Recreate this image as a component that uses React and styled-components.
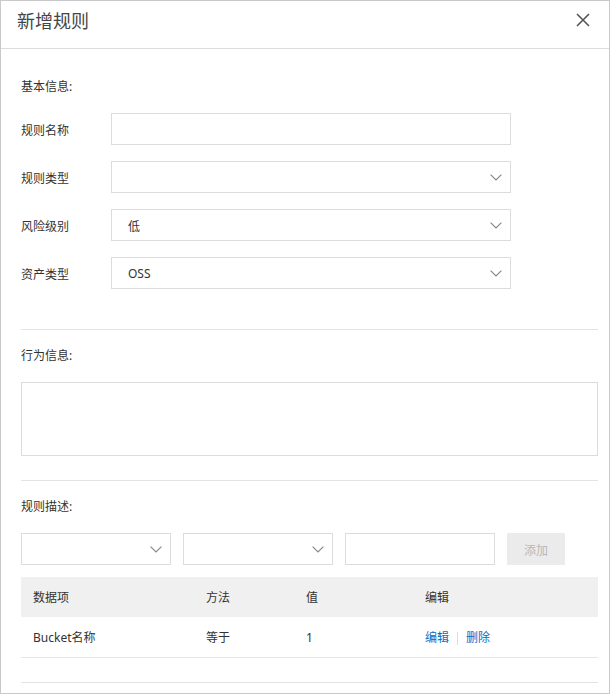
import React from "react";
import styled, { createGlobalStyle } from "styled-components";

const Global = createGlobalStyle`
  html, body { margin: 0; padding: 0; background: #fff; }
  body { font-family: "Noto Sans", "Noto Sans CJK SC", sans-serif; color: #333; }
  * { box-sizing: border-box; }
`;

const Dialog = styled.div`
  width: 610px;
  height: 694px;
  border: 1px solid #c9c9c9;
  background: #fff;
  display: flex;
  flex-direction: column;
  overflow: hidden;
`;

const Header = styled.div`
  height: 48px;
  flex: none;
  border-bottom: 1px solid #dcdcdc;
  display: flex;
  justify-content: space-between;
  align-items: flex-start;
  padding: 8px 19px 0 16px;
`;

const Title = styled.div`
  font-size: 18px;
  line-height: 24px;
  color: #444;
`;

const Close = styled.button`
  border: 0;
  background: none;
  padding: 0;
  margin-top: 4px;
  width: 14px;
  height: 14px;
  display: flex;
  cursor: pointer;
`;

const Body = styled.div`
  padding: 0 11px 0 20px;
  display: flex;
  flex-direction: column;
`;

const Section = styled.div`
  padding-top: ${(p) => p.$top}px;
  padding-bottom: ${(p) => p.$bottom}px;
  border-bottom: ${(p) => (p.$last ? "none" : "1px solid #e3e3e3")};
  display: flex;
  flex-direction: column;
`;

const SectionTitle = styled.div`
  font-size: 12px;
  line-height: 20px;
  height: 20px;
  margin-top: 2px;
  margin-bottom: 16px;
`;

const Rows = styled.div`
  display: flex;
  flex-direction: column;
  gap: 16px;
`;

const FormRow = styled.div`
  display: flex;
  align-items: center;
  height: 32px;
`;

const Label = styled.div`
  width: 90px;
  font-size: 12px;
  line-height: 20px;
  padding-top: 4px;
`;

const Field = styled.div`
  width: ${(p) => p.$w}px;
  height: 32px;
  border: 1px solid #dcdcdc;
  background: #fff;
  display: flex;
  align-items: center;
  justify-content: space-between;
  padding: 1px 8px 0 16px;
  font-size: 12px;
  color: #333;
  flex: none;
`;

const TextArea = styled.div`
  height: 74px;
  border: 1px solid #dcdcdc;
`;

const FilterRow = styled.div`
  display: flex;
  gap: 12px;
  height: 32px;
`;

const AddButton = styled.button`
  width: 58px;
  height: 32px;
  border: 0;
  background: #ebebeb;
  color: #b8b8b8;
  font-family: inherit;
  font-size: 12px;
  padding: 1px 0 0;
`;

const Table = styled.div`
  margin-top: 12px;
  display: flex;
  flex-direction: column;
`;

const TRow = styled.div`
  display: grid;
  grid-template-columns: 173px 100px 119px 1fr;
  align-items: center;
  height: ${(p) => (p.$head ? 40 : 41)}px;
  padding-top: 2px;
  background: ${(p) => (p.$head ? "#f0f0f0" : "#fff")};
  border-bottom: ${(p) => (p.$head ? "none" : "1px solid #e6e6e6")};
  font-size: 12px;
  line-height: 20px;
`;

const Cell = styled.div`
  padding-left: 12px;
  color: #333;
  display: flex;
  align-items: center;
`;

const Link = styled.a`
  color: #0070cc;
  text-decoration: none;
  cursor: pointer;
`;

const Sep = styled.span`
  width: 1px;
  height: 13px;
  background: #dcdcdc;
  margin: 0 8px;
`;

const Footer = styled.div`
  height: 25px;
  border-bottom: 1px solid #e3e3e3;
`;

const Chevron = () => (
  <svg width="12" height="7" viewBox="0 0 12 7" fill="none">
    <path d="M0.6 0.6 L6 6 L11.4 0.6" stroke="#888" strokeWidth="1.2" />
  </svg>
);

const Select = ({ w, value }) => (
  <Field $w={w}>
    <span>{value}</span>
    <Chevron />
  </Field>
);

export default function App() {
  return (
    <>
      <Global />
      <Dialog>
        <Header>
          <Title>新增规则</Title>
          <Close aria-label="close">
            <svg width="14" height="14" viewBox="0 0 14 14">
              <path d="M1 1 L13 13 M13 1 L1 13" stroke="#555" strokeWidth="1.6" />
            </svg>
          </Close>
        </Header>
        <Body>
          <Section $top={26} $bottom={40}>
            <SectionTitle>基本信息:</SectionTitle>
            <Rows>
              <FormRow>
                <Label>规则名称</Label>
                <Field $w={400} />
              </FormRow>
              <FormRow>
                <Label>规则类型</Label>
                <Select w={400} value="" />
              </FormRow>
              <FormRow>
                <Label>风险级别</Label>
                <Select w={400} value="低" />
              </FormRow>
              <FormRow>
                <Label>资产类型</Label>
                <Select w={400} value="OSS" />
              </FormRow>
            </Rows>
          </Section>
          <Section $top={14} $bottom={24}>
            <SectionTitle>行为信息:</SectionTitle>
            <TextArea />
          </Section>
          <Section $top={14} $bottom={0} $last>
            <SectionTitle>规则描述:</SectionTitle>
            <FilterRow>
              <Select w={150} value="" />
              <Select w={150} value="" />
              <Field $w={150} />
              <AddButton>添加</AddButton>
            </FilterRow>
            <Table>
              <TRow $head>
                <Cell>数据项</Cell>
                <Cell>方法</Cell>
                <Cell>值</Cell>
                <Cell>编辑</Cell>
              </TRow>
              <TRow>
                <Cell>Bucket名称</Cell>
                <Cell>等于</Cell>
                <Cell>1</Cell>
                <Cell>
                  <Link>编辑</Link>
                  <Sep />
                  <Link>删除</Link>
                </Cell>
              </TRow>
            </Table>
            <Footer />
          </Section>
        </Body>
      </Dialog>
    </>
  );
}
